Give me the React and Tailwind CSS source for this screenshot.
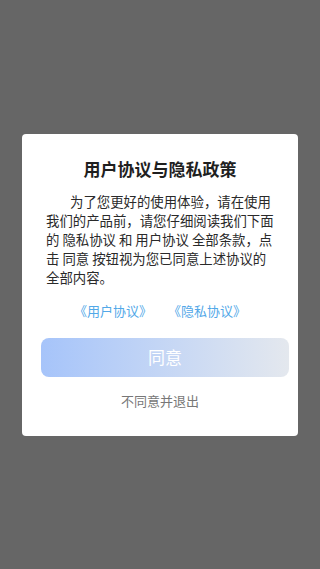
import React from "react";

export default function App() {
  const font = { fontFamily: '"Noto Sans CJK SC", "Noto Sans", sans-serif' };
  return (
    <div className="w-[320px] h-[569px] bg-[#666666] flex items-center justify-center" style={font}>
      <div className="w-[276px] bg-white rounded-[4px] px-[24px] pt-[23px] pb-[26px] flex flex-col">
        <div className="text-center text-[17px] leading-[24px] font-semibold text-[#1f1f1f]">用户协议与隐私政策</div>
        <div className="mt-[11px] text-[13.4px] leading-[19px] text-[#2a2a2a] whitespace-nowrap">
          <div className="pl-[24px]">为了您更好的使用体验，请在使用</div>
          <div>我们的产品前，请您仔细阅读我们下面</div>
          <div>的 隐私协议 和 用户协议 全部条款，点</div>
          <div>击 同意 按钮视为您已同意上述协议的</div>
          <div>全部内容。</div>
        </div>
        <div className="mt-[14px] flex justify-center gap-[16px] text-[13px] leading-[19px] text-[#52a8e8]">
          <span>《用户协议》</span>
          <span>《隐私协议》</span>
        </div>
        <div className="mt-[18px] -ml-[5px] w-[248px] h-[39px] rounded-[8px] bg-gradient-to-r from-[#a6c4fa] to-[#e4e8ee] flex items-center justify-center text-white text-[17px]">
          同意
        </div>
        <div className="mt-[14px] text-center text-[13px] leading-[19px] text-[#777777]">不同意并退出</div>
      </div>
    </div>
  );
}
